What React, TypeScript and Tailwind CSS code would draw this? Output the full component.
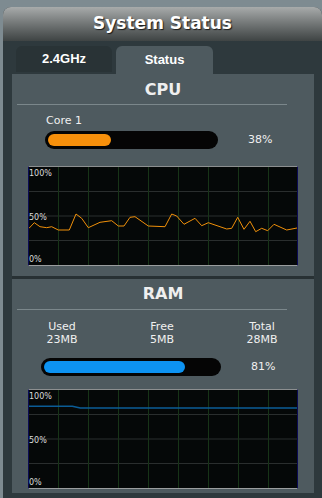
import React from 'react';

const CPU_POINTS: [number, number][] = [
  [0, 61.3], [5.3, 55.7], [11, 59.7], [17.7, 60.7], [22.7, 59.7], [29.3, 63], [40.3, 63],
  [47, 47], [52.7, 51.3], [59.3, 60.7], [71, 55.3], [82.7, 53.7], [89.3, 59], [95, 59],
  [101, 50.3], [106, 49.7], [119.3, 59], [136, 59.7], [142.7, 47], [147.7, 49], [155, 57.3],
  [166, 51.3], [172.7, 58.7], [179.3, 55.7], [197.7, 62], [202.7, 61.3], [208.7, 50.3],
  [215, 62.3], [221, 54.3], [226.7, 64.7], [232.7, 61.3], [238.7, 63.7], [245, 57.3],
  [257.7, 63], [268, 61],
];

const RAM_POINTS: [number, number][] = [
  [0, 16.2], [43.3, 16.2], [51.3, 18], [268, 18],
];

const font = "font-['DejaVu_Sans',Verdana,sans-serif]";

function Chart({ points, color, width }: { points: [number, number][]; color: string; width: number }) {
  const cols = [29, 59, 89, 119, 149, 179, 209, 239];
  const rows = [24.5, 49, 73.5];
  return (
    <div className="relative ml-[16px] h-[100px] w-[270px] border-t border-b border-l border-r border-t-[#8c8f90] border-b-[#9a9d9e] border-l-[#0b0b55] border-r-[#0b0b55] bg-[#050808]">
      <svg width={268} height={98} viewBox="0 0 268 98" className="block">
        {rows.map((y) => (
          <line key={`r${y}`} x1={0} x2={268} y1={y} y2={y} stroke="#2a2e2e" strokeWidth={1} />
        ))}
        {cols.map((x) => (
          <line key={`c${x}`} x1={x + 0.5} x2={x + 0.5} y1={0} y2={98} stroke="#173417" strokeWidth={1} />
        ))}
        <polyline
          points={points.map((p) => p.join(',')).join(' ')}
          fill="none"
          stroke={color}
          strokeWidth={width}
          strokeLinejoin="round"
        />
      </svg>
      <span className={`absolute left-0 top-[2px] text-[8px] leading-[10px] text-[#dcdcdc] ${font}`}>100%</span>
      <span className={`absolute left-0 top-[46px] text-[8px] leading-[10px] text-[#dcdcdc] ${font}`}>50%</span>
      <span className={`absolute left-0 top-[88px] text-[8px] leading-[10px] text-[#dcdcdc] ${font}`}>0%</span>
    </div>
  );
}

function SectionTitle({ title, gap }: { title: string; gap: string }) {
  return (
    <>
      <div className={`w-[302px] text-center text-[16px] font-bold leading-[19px] text-[#efefef] ${font}`}>{title}</div>
      <div className={`ml-[5px] h-px w-[270px] bg-[#7b878b] ${gap}`} />
    </>
  );
}

export default function App() {
  return (
    <div className={`h-[498px] w-[322px] overflow-hidden bg-[#7e8b91] pl-[3px] pt-[7px] ${font}`}>
      <div className="flex w-[319px] flex-col rounded-t-[8px] bg-[#2e393d] pb-[5px]">
        {/* header */}
        <div className="flex h-[34px] items-center justify-center rounded-t-[8px] bg-gradient-to-b from-[#a8abab] to-[#3f4444]">
          <span className="text-[17px] font-bold text-white [text-shadow:1px_1px_1px_#1a1a1a]">System Status</span>
        </div>

        {/* tabs */}
        <div className="flex items-start gap-[4px] pl-[13px] pt-[5px]">
          <div className="flex h-[26px] w-[96px] items-center justify-center rounded-t-[6px] bg-[#293336] font-['Liberation_Sans',Arial,sans-serif] text-[13px] font-bold text-white">
            2.4GHz
          </div>
          <div className="flex h-[28px] w-[97px] items-center justify-center rounded-t-[6px] bg-[#4e5a5f] font-['Liberation_Sans',Arial,sans-serif] text-[13px] font-bold text-white">
            Status
          </div>
        </div>

        {/* content */}
        <div className="ml-[9px] w-[302px] bg-[#4e5a5f]">
          {/* CPU */}
          <div className="flex flex-col pb-[10px] pt-[6px]">
            <SectionTitle title="CPU" gap="mt-[5px]" />
            <div className="ml-[34px] mt-[9px] text-[11px] leading-[13px] text-[#f0f0f0]">Core 1</div>
            <div className="ml-[33px] mt-[4px] flex items-center">
              <div className="h-[18px] w-[173px] rounded-full bg-[#050505] p-[3px]">
                <div className="h-[12px] w-[38%] rounded-full bg-[#f7900b]" />
              </div>
              <span className="ml-[30px] text-[11px] text-[#f0f0f0]">38%</span>
            </div>
            <div className="mt-[17px]">
              <Chart points={CPU_POINTS} color="#f0900a" width={1} />
            </div>
          </div>

          <div className="h-[3px] bg-[#283134]" />

          {/* RAM */}
          <div className="flex flex-col pb-[4px] pt-[5px]">
            <SectionTitle title="RAM" gap="mt-[6px]" />
            <div className="mt-[10px] grid w-[300px] grid-cols-3 text-center text-[11px] leading-[13px] text-[#f0f0f0]">
              <div>
                <div>Used</div>
                <div>23MB</div>
              </div>
              <div>
                <div>Free</div>
                <div>5MB</div>
              </div>
              <div>
                <div>Total</div>
                <div>28MB</div>
              </div>
            </div>
            <div className="ml-[29px] mt-[12px] flex items-center">
              <div className="h-[18px] w-[180px] rounded-full bg-[#050505] p-[3px]">
                <div className="h-[12px] w-[81%] rounded-full bg-[#0d93f2]" />
              </div>
              <span className="ml-[30px] text-[11px] text-[#f0f0f0]">81%</span>
            </div>
            <div className="mt-[13px]">
              <Chart points={RAM_POINTS} color="#0b5c96" width={1.6} />
            </div>
          </div>
        </div>
      </div>
    </div>
  );
}
